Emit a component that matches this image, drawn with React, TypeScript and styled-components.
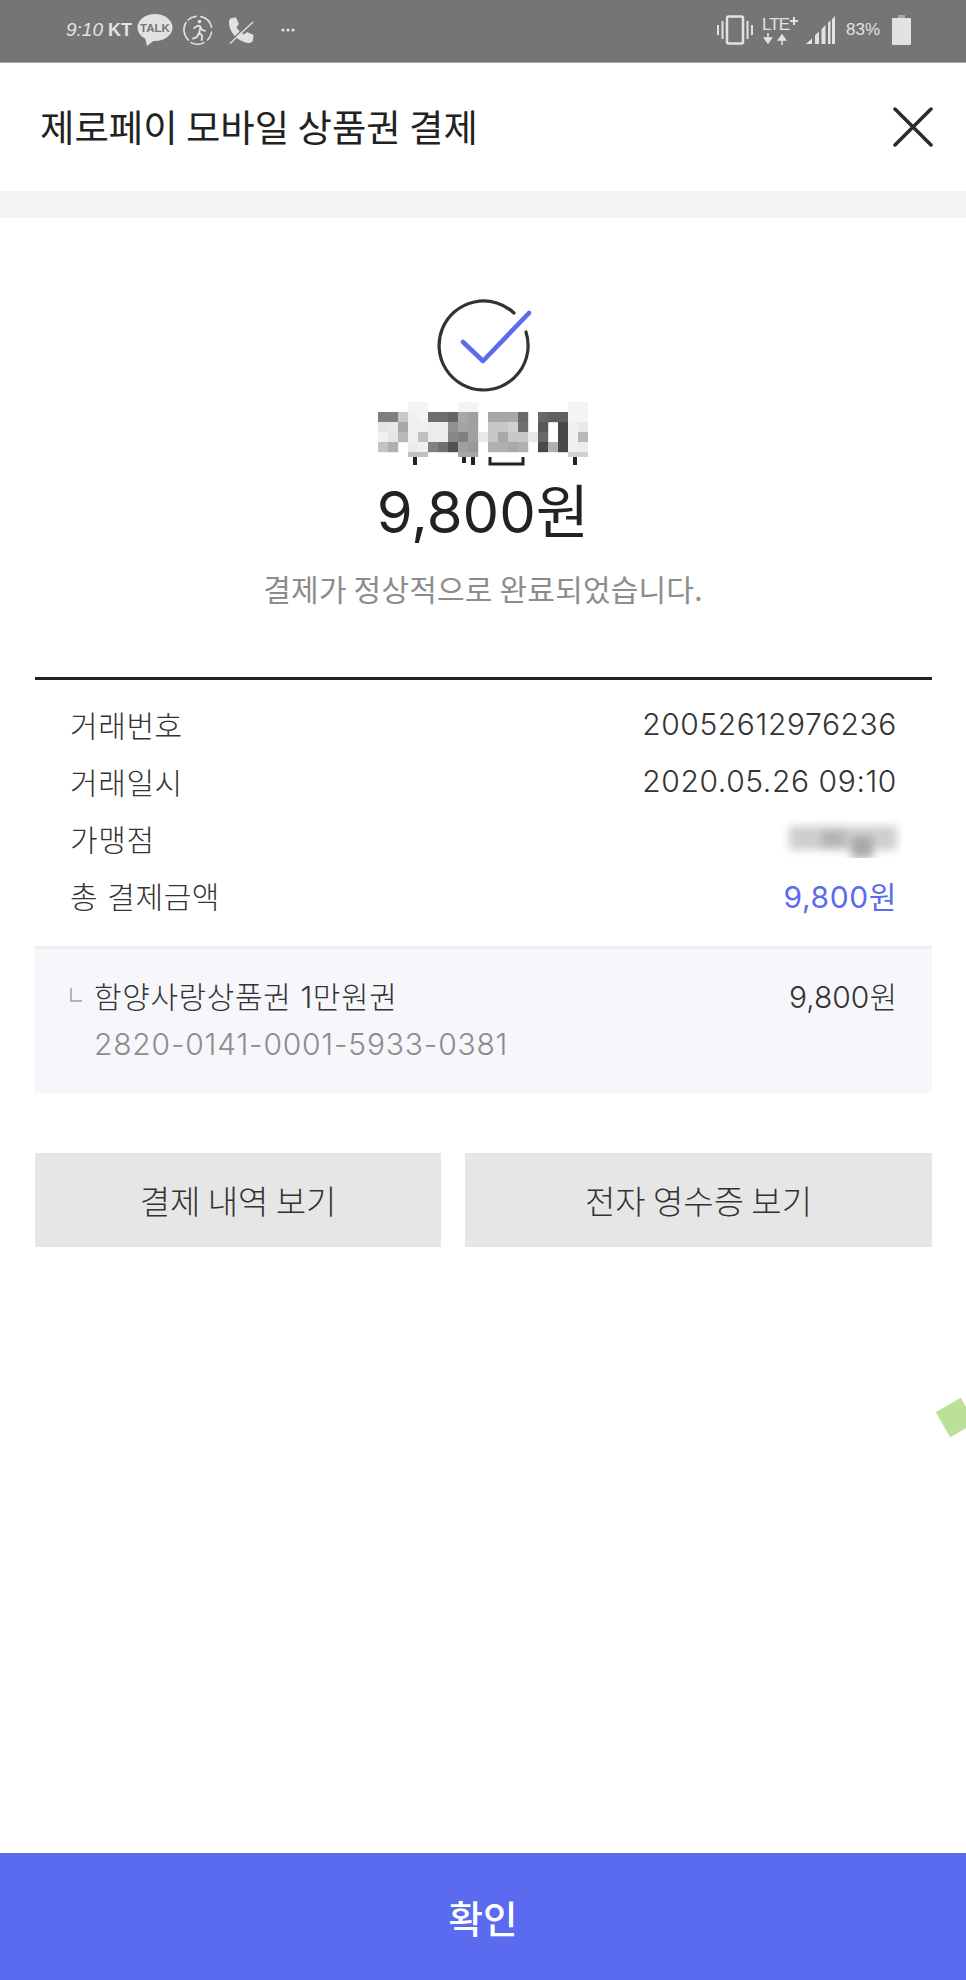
import * as React from 'react';
import styled, { createGlobalStyle } from 'styled-components';

const GlobalStyle = createGlobalStyle`
  html, body {
    margin: 0;
    padding: 0;
    background: #fff;
  }
  * {
    box-sizing: border-box;
  }
`;

const Page = styled.div`
  position: relative;
  width: 966px;
  height: 1980px;
  overflow: hidden;
  display: flex;
  flex-direction: column;
  background: #fff;
  color: #222;
  font-family: "Inter", "Noto Sans CJK KR", sans-serif;
`;

const StatusBar = styled.div`
  height: 63px;
  flex: none;
  display: flex;
  align-items: center;
  justify-content: space-between;
  padding: 0 55px 2px 66px;
  background: #757575;
  border-bottom: 1px solid #a8a8a8;
  color: #e2e2e2;
`;

const StatusGroup = styled.div`
  display: flex;
  align-items: center;
`;

const IconSlot = styled.span<{ $left?: number }>`
  display: flex;
  margin-left: ${(p) => p.$left || 0}px;
`;

const Clock = styled.span`
  width: 42px;
  font-family: "Liberation Sans", sans-serif;
  font-style: italic;
  font-size: 19px;
  white-space: nowrap;
`;

const Carrier = styled.span`
  width: 29px;
  font-family: "Liberation Sans", sans-serif;
  font-size: 18px;
  font-weight: 700;
`;

const BatteryLevel = styled.span`
  width: 46px;
  margin-left: 10px;
  font-family: "Liberation Sans", sans-serif;
  font-size: 17px;
  white-space: nowrap;
`;

const Header = styled.header`
  height: 128px;
  flex: none;
  display: flex;
  align-items: center;
  justify-content: space-between;
  padding: 0 33px 0 40px;
`;

const Title = styled.h1`
  margin: 0 0 2px;
  font-family: "Noto Sans CJK KR", sans-serif;
  font-size: 37.4px;
  font-weight: 400;
  color: #222;
`;

const Band = styled.div`
  height: 27px;
  flex: none;
  background: #f4f4f4;
`;

const Hero = styled.section`
  display: flex;
  flex-direction: column;
  align-items: center;
  padding-top: 81px;
`;

const CheckMark = styled.svg`
  display: block;
  overflow: visible;
`;

const Mosaic = styled.svg`
  display: block;
  margin-top: 11px;
`;

const Amount = styled.div`
  margin-top: 4px;
  height: 84px;
  line-height: 84px;
  font-size: 58px;
  font-weight: 400;
  color: #222;
`;

const Notice = styled.p`
  margin: 12px 0 0;
  height: 44px;
  line-height: 44px;
  font-family: "Noto Sans CJK KR", sans-serif;
  font-size: 30px;
  letter-spacing: 0.2px;
  color: #8c8c8c;
`;

const Content = styled.section`
  margin: 67px 34px 0 35px;
`;

const Summary = styled.div`
  border-top: 3px solid #222;
  padding: 15px 35px 23px;
`;

const Row = styled.div`
  height: 57px;
  display: flex;
  align-items: center;
  justify-content: space-between;
  font-size: 30px;
  font-weight: 300;
  letter-spacing: 0.6px;
  color: #333;
`;

const Value = styled.span<{ $accent?: boolean }>`
  font-weight: ${(p) => (p.$accent ? 400 : 300)};
  color: ${(p) => (p.$accent ? '#5a6bef' : '#333')};
`;

const ItemPanel = styled.div`
  height: 147px;
  border-top: 3px solid #eeeeee;
  background: #f6f6fb;
  padding: 23px 35px 0 35px;
`;

const ItemTop = styled.div`
  display: flex;
  align-items: center;
  justify-content: space-between;
  height: 46px;
  font-size: 30px;
  font-weight: 300;
  color: #333;
`;

const ItemName = styled.div`
  display: flex;
  align-items: center;
  gap: 12px;
  letter-spacing: 0.6px;
`;

const ItemCode = styled.div`
  margin: 3px 0 0 24px;
  height: 46px;
  line-height: 46px;
  font-size: 30px;
  font-weight: 300;
  letter-spacing: 0.8px;
  color: #8c8c8c;
`;

const Actions = styled.div`
  display: grid;
  grid-template-columns: 406px 467px;
  gap: 24px;
  margin-top: 60px;
`;

const ActionButton = styled.button`
  height: 94px;
  border: 0;
  padding: 0;
  background: #e6e6e6;
  color: #333;
  font-family: "Noto Sans CJK KR", sans-serif;
  font-size: 33px;
  font-weight: 300;
`;

const ConfirmButton = styled.button`
  margin-top: auto;
  height: 127px;
  flex: none;
  border: 0;
  background: #5a6bef;
  color: #fff;
  font-family: "Noto Sans CJK KR", sans-serif;
  font-size: 37.5px;
  font-weight: 500;
`;

const FloatingChip = styled.div`
  position: absolute;
  left: 941px;
  top: 1403px;
  width: 29px;
  height: 29px;
  background: #bbe09a;
  transform: rotate(-30deg);
  filter: blur(0.6px);
`;

const BlurredName = styled.svg`
  display: block;
  margin-right: -6px;
`;

// gray level of each mosaic cell of the censored merchant name, ff = nothing drawn
const mosaic: string[][] = [
  ['ff', 'ff', 'ff', 'f4', 'f4', 'ff', 'ff', 'ff', 'f4', 'f4', 'ff', 'ff', 'ff', 'ff', 'ff', 'ff', 'ff', 'ff', 'ff', 'f4', 'f4'],
  ['7f', '7f', 'c8', 'f0', 'f4', '6e', '6e', '66', 'a8', 'a0', 'ff', 'a8', 'a8', 'a8', '68', 'ff', '68', '60', '60', 'f4', 'f4'],
  ['e4', 'e8', 'a8', 'f0', 'f0', 'ec', 'ee', '90', 'a4', 'a0', 'ff', 'c8', 'c8', 'd0', '70', 'ff', '58', 'ff', '48', 'f0', 'e8'],
  ['ef', 'e4', 'b8', 'f0', 'c0', 'ec', 'ec', '88', '80', 'a0', 'e8', 'c8', 'a8', 'c8', 'c8', 'e8', '68', 'ff', '48', 'f0', 'b8'],
  ['c4', 'b0', 'ff', 'ec', 'f0', '80', '70', '50', 'a0', '98', 'ff', 'b0', 'b0', 'a8', 'b0', 'ff', '48', 'b0', '48', 'f0', 'ec'],
  ['ff', 'ff', 'ff', 'c0', 'c0', 'ff', 'ff', 'ff', 'a8', 'a8', 'ff', 'ff', 'ff', 'ff', 'ff', 'ff', 'ff', 'ff', 'ff', 'd0', 'd0'],
];

const NameMosaic = () => (
  <Mosaic width="210" height="64" viewBox="0 0 210 64">
    {mosaic.map((row, y) =>
      row.map((v, x) =>
        v === 'ff' ? null : (
          <rect key={`${x}-${y}`} x={x * 10} y={y * 10} width="10.2" height={y === 5 ? 5 : 10.2} fill={`#${v}${v}${v}`} />
        ),
      ),
    )}
    <g fill="#222">
      <rect x="35" y="55" width="4" height="8" />
      <rect x="84" y="55" width="4" height="6" />
      <rect x="93" y="55" width="4" height="8" />
      <rect x="195" y="55" width="4" height="8" />
    </g>
    <path d="M112 55v7h33v-7" fill="none" stroke="#222" strokeWidth="3" />
  </Mosaic>
);

const TalkIcon = () => (
  <svg width="36" height="32" viewBox="0 0 36 32">
    <ellipse cx="18" cy="13.5" rx="17.5" ry="13.5" fill="#e2e2e2" />
    <path d="M8 23l2 9 9-7z" fill="#e2e2e2" />
    <text x="18" y="18" textAnchor="middle" fontFamily="Liberation Sans" fontSize="11.5" fontWeight="700" fill="#757575">TALK</text>
  </svg>
);

const RunIcon = () => (
  <svg width="30" height="30" viewBox="0 0 30 30" fill="none" stroke="#e2e2e2" strokeLinecap="round" strokeLinejoin="round">
    <path d="M18 1.6a14 14 0 0 1 10.5 10.5M28.6 17a14 14 0 0 1-4 8M21 27.6a14 14 0 0 1-13 0M5.4 25A14 14 0 0 1 3 7.5M5 5a14 14 0 0 1 8-3.6" strokeWidth="1.6" />
    <circle cx="16.5" cy="6.6" r="1.8" fill="#e2e2e2" stroke="none" />
    <path d="M11 13l4-2.4 2.6 1-1.4 6 3 3-.6 4.6M16 18l-2 4-4 1.6M17.5 12l1.5 3 3 .8" strokeWidth="1.8" />
  </svg>
);

const PhoneIcon = () => (
  <svg width="27" height="27" viewBox="0 0 27 27">
    <path d="M3.5 1L8 0.5l3 6.5-2.4 3c1.5 3.4 4 5.8 7.4 7.4l3-2.5 6.5 3-0.5 5c-0.4 2-2 3-4 3C10 25 1 15.5 1 5c0-2 1-3.5 2.5-4z" fill="#e2e2e2" />
    <path d="M2 26.5L25 5" stroke="#e2e2e2" strokeWidth="1.4" />
    <path d="M2 24.5L23 4.5" stroke="#757575" strokeWidth="1.2" />
  </svg>
);

const DotsIcon = () => (
  <svg width="14" height="4" viewBox="0 0 14 4" fill="#e2e2e2">
    <circle cx="2" cy="2" r="1.5" />
    <circle cx="7" cy="2" r="1.5" />
    <circle cx="12" cy="2" r="1.5" />
  </svg>
);

const VibrateIcon = () => (
  <svg width="36" height="30" viewBox="0 0 36 30" fill="none" stroke="#e2e2e2" strokeWidth="2">
    <rect x="10" y="1.5" width="16" height="27" rx="1.5" strokeWidth="2.5" />
    <path d="M1 10v10M5.5 6v18M30.5 6v18M35 10v10" />
  </svg>
);

const LteIcon = () => (
  <svg width="37" height="30" viewBox="0 0 37 30">
    <text x="0" y="14.5" fontFamily="Liberation Sans" fontSize="17" fill="#e2e2e2" textLength="28">LTE</text>
    <path d="M28 6h8M32 2v8" stroke="#e2e2e2" strokeWidth="2" />
    <path d="M6 18v7M2.5 23l3.5 5 3.5-5zM20 30v-7M16.5 25l3.5-5 3.5 5z" fill="#e2e2e2" stroke="#e2e2e2" strokeWidth="1.5" />
  </svg>
);

const SignalIcon = () => (
  <svg width="30" height="30" viewBox="0 0 30 30" fill="#e2e2e2">
    <path d="M0 29l6-5.8V29zM9 29V20.300l4-3.900V29zM15.500 29V14l4-3.900V29zM22 29V7.700l2.500-2.400V29zM26 29V3.900L29 1v28z" />
  </svg>
);

const BatteryIcon = () => (
  <svg width="19" height="30" viewBox="0 0 19 30" fill="#e2e2e2">
    <rect x="6" y="0" width="7" height="3" fill="#a8a8a8" />
    <rect x="0" y="3" width="19" height="27" rx="1" />
  </svg>
);

const CheckIcon = () => (
  <CheckMark width="92" height="92" viewBox="0 0 92 92" fill="none" strokeLinecap="round" strokeLinejoin="round">
    <path d="M89 33A44.5 44.5 0 1 1 77 14" stroke="#333" strokeWidth="3.2" />
    <path d="M26 43l20 19L92 14" stroke="#5a6bef" strokeWidth="4.6" />
  </CheckMark>
);

const CloseIcon = () => (
  <svg width="40" height="40" viewBox="0 0 40 40" stroke="#2b2b2b" strokeWidth="3.5" strokeLinecap="round">
    <path d="M2 2l36 36M38 2L2 38" />
  </svg>
);

const CornerIcon = () => (
  <svg width="12" height="14" viewBox="0 0 12 14" fill="none" stroke="#b4b4b4" strokeWidth="2">
    <path d="M1 0v13h11" />
  </svg>
);

const MerchantBlur = () => (
  <BlurredName width="122" height="40" viewBox="0 0 122 40">
    <defs>
      <filter id="soft" x="-20%" y="-50%" width="140%" height="200%">
        <feGaussianBlur stdDeviation="4.5" />
      </filter>
    </defs>
    <g filter="url(#soft)">
      <rect x="8" y="8" width="108" height="24" fill="#cfcfcf" />
      <rect x="40" y="12" width="24" height="18" fill="#b4b4b4" />
      <rect x="70" y="18" width="22" height="22" fill="#a8a8a8" />
    </g>
  </BlurredName>
);

const App = () => (
  <Page>
    <GlobalStyle />
    <StatusBar>
      <StatusGroup>
        <Clock>9:10</Clock>
        <Carrier>KT</Carrier>
        <TalkIcon />
        <IconSlot $left={10}><RunIcon /></IconSlot>
        <IconSlot $left={15}><PhoneIcon /></IconSlot>
        <IconSlot $left={26}><DotsIcon /></IconSlot>
      </StatusGroup>
      <StatusGroup>
        <VibrateIcon />
        <IconSlot $left={9}><LteIcon /></IconSlot>
        <IconSlot $left={7}><SignalIcon /></IconSlot>
        <BatteryLevel>83%</BatteryLevel>
        <BatteryIcon />
      </StatusGroup>
    </StatusBar>
    <Header>
      <Title>제로페이 모바일 상품권 결제</Title>
      <CloseIcon />
    </Header>
    <Band />
    <Hero>
      <CheckIcon />
      <NameMosaic />
      <Amount>9,800원</Amount>
      <Notice>결제가 정상적으로 완료되었습니다.</Notice>
    </Hero>
    <Content>
      <Summary>
        <Row>
          <span>거래번호</span>
          <Value>20052612976236</Value>
        </Row>
        <Row>
          <span>거래일시</span>
          <Value>2020.05.26 09:10</Value>
        </Row>
        <Row>
          <span>가맹점</span>
          <MerchantBlur />
        </Row>
        <Row>
          <span>총 결제금액</span>
          <Value $accent>9,800원</Value>
        </Row>
      </Summary>
      <ItemPanel>
        <ItemTop>
          <ItemName>
            <CornerIcon />
            <span>함양사랑상품권 1만원권</span>
          </ItemName>
          <Value>9,800원</Value>
        </ItemTop>
        <ItemCode>2820-0141-0001-5933-0381</ItemCode>
      </ItemPanel>
      <Actions>
        <ActionButton>결제 내역 보기</ActionButton>
        <ActionButton>전자 영수증 보기</ActionButton>
      </Actions>
    </Content>
    <ConfirmButton>확인</ConfirmButton>
    <FloatingChip />
  </Page>
);

export default App;
